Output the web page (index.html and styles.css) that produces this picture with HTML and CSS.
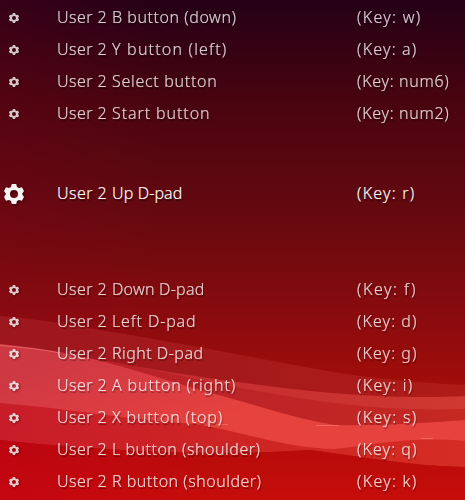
FILE: index.html
```html
<!DOCTYPE html>
<html lang="en">
<head>
<meta charset="utf-8">
<title>Input settings</title>
<link rel="stylesheet" href="styles.css">
</head>
<body>
<svg class="ribbon" viewBox="0 0 465 500" aria-hidden="true">
  <defs>
    <linearGradient id="haze"><stop offset="0" stop-color="#9d171f"/><stop offset=".5" stop-color="#a5191b"/><stop offset="1" stop-color="#af1c18"/></linearGradient>
    <linearGradient id="band"><stop offset="0" stop-color="#bd2b35"/><stop offset=".5" stop-color="#c62e30"/><stop offset="1" stop-color="#d03831"/></linearGradient>
    <linearGradient id="mid"><stop offset="0" stop-color="#b32028"/><stop offset=".5" stop-color="#bd2427"/><stop offset="1" stop-color="#c62822"/></linearGradient>
    <linearGradient id="bright" gradientUnits="userSpaceOnUse" x1="100" y1="340" x2="140" y2="450"><stop offset="0" stop-color="#cd3843"/><stop offset=".5" stop-color="#db3c42"/><stop offset="1" stop-color="#e6423e"/></linearGradient>
    <linearGradient id="low"><stop offset="0" stop-color="#c81d29"/><stop offset=".5" stop-color="#cd2424"/><stop offset="1" stop-color="#d52d23"/></linearGradient>
    <linearGradient id="floor" x2="0" y2="1"><stop offset="0" stop-color="#b50b0b"/><stop offset="1" stop-color="#c60d0a"/></linearGradient>
    <linearGradient id="edge"><stop offset="0" stop-color="#c40016" stop-opacity=".5"/><stop offset="1" stop-color="#c40016" stop-opacity="0"/></linearGradient>
  </defs>
  <path fill="url(#haze)" d="M0 316C40 319 70 325 100 330C180 343 240 355 300 366C350 376 410 383 465 385V430H0Z"/>
  <path fill="url(#band)" d="M0 344C90 357 160 372 230 381C310 392 380 400 465 396V430H0Z"/>
  <path fill="url(#mid)" d="M0 347C50 349 77 356 110 362C180 374 210 383 230 386C310 401 380 412 465 409V435H0Z"/>
  <path fill="url(#low)" d="M0 390L100 400L200 415L335 437L465 430V467C410 466 365 457 310 450C230 455 150 453 80 447Q40 445 0 440Z"/>
  <path fill="url(#floor)" d="M0 440Q40 445 80 447C150 453 230 455 310 450C365 457 410 466 465 467V500H0Z"/>
  <path fill="url(#edge)" d="M0 440Q40 445 80 447C150 453 170 454 220 454V500H0Z"/>
  <path fill="url(#bright)" d="M0 344C90 352 150 376 200 390C245 401 290 418 335 425C380 426 425 423 465 420V441C410 436 370 445 335 449C285 448 240 431 195 424C130 420 65 408 0 403Z"/>
  <path class="glint" d="M0 345.500Q35 348 60 353M217 424.500H228M316 425.500H339M421 438.500H433"/>
</svg>
<svg class="defs" aria-hidden="true"><symbol id="gear" viewBox="-10 -10 20 20"><path fill-rule="evenodd" d="M-2.200 -10H2.200L3 -6.900L5 -5.900L8 -6.700L10 -2.900L8 0L10 2.900L8 6.700L5 5.900L3 6.900L2.200 10H-2.200L-3 6.900L-5 5.900L-8 6.700L-10 2.900L-8 0L-10 -2.900L-8 -6.700L-5 -5.900L-3 -6.900ZM4 0A4 4 0 1 0 -4 0A4 4 0 1 0 4 0Z"/></symbol></svg>
<main class="menu" id="menu"></main>
<script src="menu.js"></script>
</body>
</html>
```
FILE: styles.css
```css
body {
  margin: 0;
  width: 465px;
  height: 500px;
  overflow: hidden;
  background: linear-gradient(90deg, rgba(150, 0, 30, .15), transparent 35%),
    linear-gradient(#250017 0, #48040f 100px, #5f0810 190px, #710a0e 250px, #880b0f 310px, #a00d0a 380px, #c41008 500px);
  color: #fff;
  font-family: "Noto Sans", "Open Sans", sans-serif;
  font-weight: 350;
  font-size: 16px;
}
.ribbon {
  position: absolute;
  top: 0;
  left: 0;
  width: 465px;
  height: 500px;
}
.glint {
  fill: none;
  stroke: #ff8c84;
  stroke-opacity: .45;
}
.defs {
  display: none;
}
.menu {
  position: relative;
  display: flex;
  flex-direction: column;
  padding-top: 2px;
}
.row {
  display: grid;
  grid-template-columns: 28px 29px 55px 245px 1fr;
  align-items: center;
  height: 32px;
  line-height: 30px;
  white-space: nowrap;
  opacity: .82;
  text-shadow: 1px 2px 1px rgba(0, 0, 0, .45);
}
.row.active {
  margin: 48px 0 64px;
  opacity: 1;
}
.gear {
  width: 10px;
  height: 10px;
  justify-self: center;
  fill: #f6f3f3;
  filter: drop-shadow(1px 1px 1px rgba(0, 0, 0, .45));
}
.active .gear {
  width: 20px;
  height: 20px;
}
.user {
  grid-column: 3;
}
.fit {
  justify-self: start;
  padding-bottom: 2px;
  -webkit-text-stroke: .15px #fff;
}
```
FILE: menu.js
```js
// label, label width, key, key width
const rows = [
  ["B button (down)", 124.5, "w", 64.500],
  ["Y button (left)", 115.5, "a", 60.500],
  ["Select button", 105.500, "num6", 92.500],
  ["Start button", 98.500, "num2", 92.500],
  ["Up D-pad", 70.500, "r", 58.500],
  ["Down D-pad", 92.500, "f", 60],
  ["Left D-pad", 84.500, "d", 60.500],
  ["Right D-pad", 91.500, "g", 60.500],
  ["A button (right)", 124, "i", 56.500],
  ["X button (top)", 111, "s", 60.500],
  ["L button (shoulder)", 148.500, "q", 60.500],
  ["R button (shoulder)", 149.500, "k", 60.500]
];
const menu = document.getElementById("menu");
menu.innerHTML = rows.map(([label, w, key, kw]) => `
  <div class="row${label === "Up D-pad" ? " active" : ""}">
    <svg class="gear"><use href="#gear"/></svg>
    <span class="user fit" data-width="50">User 2</span>
    <span class="fit" data-width="${w}">${label}</span>
    <span class="fit" data-width="${kw}">(Key: ${key})</span>
  </div>`).join("");
document.querySelectorAll(".fit").forEach(el => {
  const gap = el.dataset.width - el.getBoundingClientRect().width;
  el.style.letterSpacing = gap / el.textContent.length + "px";
});
```
